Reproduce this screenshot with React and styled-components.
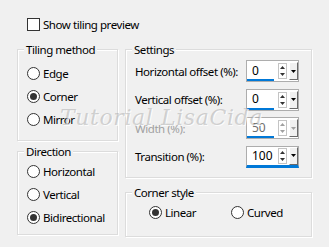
import React from 'react';
import styled, { createGlobalStyle } from 'styled-components';

const GlobalStyle = createGlobalStyle`
  html, body {
    margin: 0;
    padding: 0;
    background: #f0f0f0;
  }
  body {
    font-family: "Noto Sans", "Open Sans", sans-serif;
    font-size: 11.5px;
    letter-spacing: -0.45px;
    color: #000;
  }
`;

const Dialog = styled.div`
  position: relative;
  width: 329px;
  height: 247px;
  box-sizing: border-box;
  padding: 17px 0 0 17px;
  background: #f0f0f0;
  overflow: hidden;
`;

const CheckRow = styled.label`
  display: flex;
  align-items: center;
  gap: 3px;
  height: 15px;
  margin-left: 10px;
  line-height: 15px;
`;

const CheckMark = styled.span`
  width: 13px;
  height: 13px;
  box-sizing: border-box;
  border: 1px solid #333;
  background: #fff;
`;

const Columns = styled.div`
  display: flex;
  gap: 7px;
  margin-top: 10px;
`;

const Column = styled.div`
  display: flex;
  flex-direction: column;
  gap: ${p => p.$gap}px;
  width: ${p => p.$width}px;
`;

const Group = styled.fieldset`
  margin: 0;
  min-width: 0;
  padding: 0;
  border: 1px solid #dcdcdc;
  box-shadow: inset 1px 1px 0 #fff, 1px 1px 0 #fff;
`;

const Legend = styled.legend`
  margin-left: 6px;
  padding: 0 2px;
  line-height: 15px;
  background: #f0f0f0;
`;

const GroupBody = styled.div`
  display: flex;
  flex-direction: ${p => (p.$row ? 'row' : 'column')};
  gap: ${p => p.$gap || 0}px;
  padding: ${p => p.$pad};
`;

const Option = styled.label`
  display: flex;
  align-items: center;
  gap: 3px;
  height: 23px;
  width: ${p => (p.$width ? `${p.$width}px` : 'auto')};
  white-space: nowrap;
`;

const RadioMark = styled.span`
  width: 13px;
  height: 13px;
  box-sizing: border-box;
  border-radius: 50%;
  border: 1px solid #333;
  background: #fff;
  display: flex;
  align-items: center;
  justify-content: center;
  flex-shrink: 0;

  &::after {
    content: '';
    width: 7px;
    height: 7px;
    border-radius: 50%;
    background: #333;
    display: ${p => (p.$checked ? 'block' : 'none')};
  }
`;

const FieldRow = styled.div`
  display: flex;
  align-items: center;
  justify-content: space-between;
  height: 22px;
  white-space: nowrap;
  color: ${p => (p.$disabled ? '#a0a0a0' : '#000')};
`;

const SpinBox = styled.div`
  display: flex;
  align-items: center;
  width: 53px;
  height: 22px;
  box-sizing: border-box;
  border: 1px solid #adadad;
  border-bottom: ${p => (p.$focused ? '3px solid #0078d7' : '1px solid #adadad')};
  background: #fff;
`;

const ValueField = styled.div`
  width: 27px;
  align-self: stretch;
  box-sizing: border-box;
  display: flex;
  align-items: center;
  padding-left: 5px;
  font-size: 12px;
  letter-spacing: 0;
  border-bottom: ${p => (p.$focused ? 'none' : '2px solid #0078d7')};
  color: ${p => (p.$disabled ? '#6d6d6d' : '#000')};
`;

const Spinner = styled.div`
  margin-left: 4px;
  width: 9px;
  height: 16px;
  box-sizing: border-box;
  border: 1px solid #c4c4c4;
  display: flex;
  flex-direction: column;
  align-items: center;
  justify-content: space-around;
`;

const DropButton = styled.div`
  margin-left: 2px;
  width: 9px;
  height: 18px;
  box-sizing: border-box;
  background: #f0f0f0;
  border-top: 1px solid #fff;
  border-left: 1px solid #fff;
  border-right: 1px solid #696969;
  border-bottom: 1px solid #696969;
  display: flex;
  align-items: center;
  justify-content: center;
`;

const Watermark = styled.div`
  position: absolute;
  left: 60px;
  top: 105px;
  font-family: "DejaVu Serif", serif;
  font-style: italic;
  font-size: 22px;
  letter-spacing: 0.6px;
  color: rgba(160, 160, 160, 0.45);
  text-shadow: 1px 1px 0 rgba(255, 255, 255, 0.8);
  pointer-events: none;
  white-space: nowrap;
`;

const Arrow = ({ up, color }) => (
  <svg width="5" height="3" viewBox="0 0 5 3">
    <path d={up ? 'M0 3 L2.5 0 L5 3 Z' : 'M0 0 L5 0 L2.5 3 Z'} fill={color} />
  </svg>
);

const Spin = ({ value, disabled, focused }) => {
  const color = disabled ? '#a0a0a0' : '#333';
  return (
    <SpinBox $focused={focused}>
      <ValueField $disabled={disabled} $focused={focused}>{value}</ValueField>
      <Spinner>
        <Arrow up color={color} />
        <Arrow color={color} />
      </Spinner>
      <DropButton>
        <Arrow color={disabled ? '#a0a0a0' : '#000'} />
      </DropButton>
    </SpinBox>
  );
};

const Radio = ({ label, checked, width }) => (
  <Option $width={width}>
    <RadioMark $checked={checked} />
    {label}
  </Option>
);

const settings = [
  { label: 'Horizontal offset (%):', value: '0' },
  { label: 'Vertical offset (%):', value: '0' },
  { label: 'Width (%):', value: '50', disabled: true },
  { label: 'Transition (%):', value: '100', focused: true },
];

export default function App() {
  return (
    <>
      <GlobalStyle />
      <Dialog>
        <CheckRow>
          <CheckMark />
          Show tiling preview
        </CheckRow>
        <Columns>
          <Column $width={101} $gap={3}>
            <Group>
              <Legend>Tiling method</Legend>
              <GroupBody $pad="5px 0 9px 9px">
                <Radio label="Edge" />
                <Radio label="Corner" checked />
                <Radio label="Mirror" />
              </GroupBody>
            </Group>
            <Group>
              <Legend>Direction</Legend>
              <GroupBody $pad="1px 0 5px 9px">
                <Radio label="Horizontal" />
                <Radio label="Vertical" />
                <Radio label="Bidirectional" checked />
              </GroupBody>
            </Group>
          </Column>
          <Column $width={187} $gap={7}>
            <Group>
              <Legend>Settings</Legend>
              <GroupBody $pad="3px 12px 9px 9px" $gap={6.5}>
                {settings.map(s => (
                  <FieldRow key={s.label} $disabled={s.disabled}>
                    {s.label}
                    <Spin value={s.value} disabled={s.disabled} focused={s.focused} />
                  </FieldRow>
                ))}
              </GroupBody>
            </Group>
            <Group>
              <Legend>Corner style</Legend>
              <GroupBody $pad="1px 0 12px 23px" $row>
                <Radio label="Linear" checked width={82} />
                <Radio label="Curved" />
              </GroupBody>
            </Group>
          </Column>
        </Columns>
        <Watermark>Tutorial LisaCida</Watermark>
      </Dialog>
    </>
  );
}
